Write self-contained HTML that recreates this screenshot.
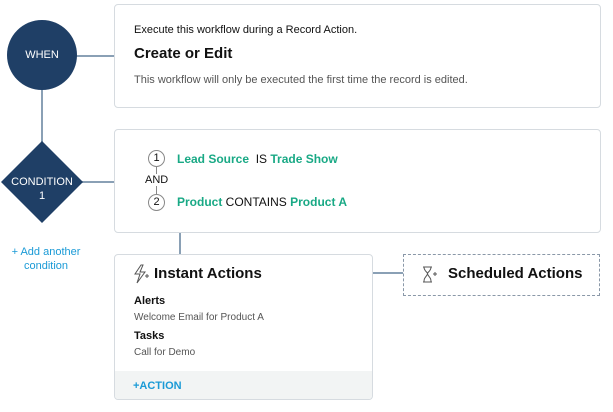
<!DOCTYPE html>
<html><head><style>
body{margin:0;width:613px;height:412px;background:#fff;font-family:"Liberation Sans",sans-serif;position:relative;overflow:hidden;color:#111}
.a{position:absolute}
.box{position:absolute;border:1px solid #d6dbe0;border-radius:4px;background:#fff;box-sizing:border-box}
.ln{position:absolute;background:#8aa0b5}
.g{color:#19a985;font-weight:bold}
.num{position:absolute;width:15px;height:15px;border:1px solid #888;border-radius:50%;font-size:11px;text-align:center;line-height:15px;box-sizing:content-box;background:#fff}
</style></head><body>
<div class="ln" style="left:41px;top:88px;width:2px;height:54px"></div>
<div class="ln" style="left:76px;top:55px;width:38px;height:2px"></div>
<div class="ln" style="left:80px;top:181px;width:34px;height:2px"></div>
<div class="ln" style="left:179px;top:232px;width:2px;height:22px"></div>
<div class="ln" style="left:372px;top:272px;width:31px;height:2px"></div>
<div class="a" style="left:7px;top:20px;width:70px;height:70px;border-radius:50%;background:#1f3f66;color:#fff;font-size:11px;text-align:center;line-height:70px">WHEN</div>
<div class="a" style="left:13px;top:153px;width:58px;height:58px;background:#1f3f66;transform:rotate(45deg)"></div>
<div class="a" style="left:0;top:175px;width:84px;color:#fff;font-size:11px;text-align:center;line-height:14px">CONDITION<br>1</div>
<div class="a" style="left:6px;top:245px;color:#1a9ad6;font-size:11px;line-height:14px;width:80px;text-align:center">+ Add another condition</div>
<div class="box" style="left:114px;top:4px;width:487px;height:104px">
 <div class="a" style="left:19px;top:19px;font-size:11px">Execute this workflow during a Record Action.</div>
 <div class="a" style="left:19px;top:40px;font-size:15px;font-weight:bold;color:#111">Create or Edit</div>
 <div class="a" style="left:19px;top:69px;font-size:11px;color:#555">This workflow will only be executed the first time the record is edited.</div>
</div>
<div class="box" style="left:114px;top:129px;width:487px;height:104px">
 <div class="ln" style="left:41px;top:34px;width:1px;height:30px;background:#888"></div>
 <div class="num" style="left:33px;top:20px">1</div>
 <div class="a" style="left:30px;top:44px;font-size:11px;background:#fff">AND</div>
 <div class="num" style="left:33px;top:64px">2</div>
 <div class="a" style="left:62px;top:22px;font-size:12px"><span class="g">Lead Source</span>&nbsp; IS <span class="g">Trade Show</span></div>
 <div class="a" style="left:62px;top:65px;font-size:12px"><span class="g">Product</span> CONTAINS <span class="g">Product A</span></div>
</div>
<div class="box" style="left:114px;top:254px;width:259px;height:146px;overflow:hidden">
 <svg class="a" style="left:18px;top:9px" width="18" height="20" viewBox="0 0 18 20"><path d="M8 1L2 10h5l-3 9 8-11H7l3-7z" fill="none" stroke="#555" stroke-width="1"/><path d="M12 12h4M14 10v4" stroke="#555"/></svg>
 <div class="a" style="left:39px;top:10px;font-size:15px;font-weight:bold">Instant Actions</div>
 <div class="a" style="left:19px;top:40px;font-size:11px;font-weight:bold">Alerts</div>
 <div class="a" style="left:19px;top:57px;font-size:10px;color:#555">Welcome Email for Product A</div>
 <div class="a" style="left:19px;top:75px;font-size:11px;font-weight:bold">Tasks</div>
 <div class="a" style="left:19px;top:92px;font-size:10px;color:#555">Call for Demo</div>
 <div class="a" style="left:0;top:116px;width:259px;height:30px;background:#f2f4f4"></div>
 <div class="a" style="left:18px;top:125px;font-size:11px;font-weight:bold;color:#1a9ad6">+ACTION</div>
</div>
<div class="a" style="left:403px;top:254px;width:197px;height:42px;border:1px dashed #8a98a8;box-sizing:border-box">
 <svg class="a" style="left:17px;top:11px" width="18" height="18" viewBox="0 0 18 18"><path d="M2 1h9M2 16h9M3 1c0 5 5 5 3 8-2 3-3 3-3 7M10 1c0 5-5 5-3 8 2 3 3 3 3 7" fill="none" stroke="#555"/><path d="M12 8h4M14 6v4" stroke="#555"/></svg>
 <div class="a" style="left:44px;top:10px;font-size:15px;font-weight:bold">Scheduled Actions</div>
</div>
</body></html>
